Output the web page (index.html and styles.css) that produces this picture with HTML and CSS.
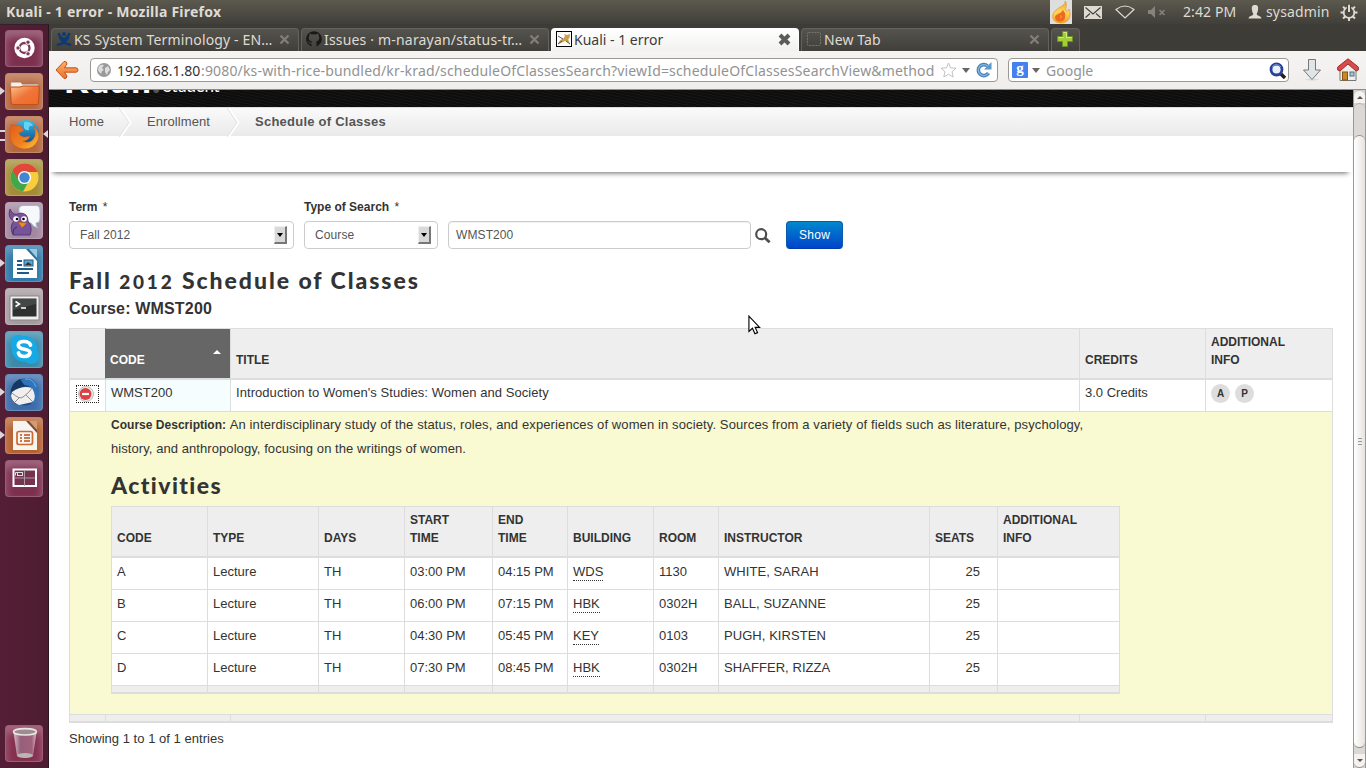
FILE: index.html
```html
<!DOCTYPE html>
<html lang="en">
<head>
<meta charset="utf-8">
<title>Kuali - 1 error</title>
<link rel="stylesheet" href="styles.css">
</head>
<body>
<header class="panel">
  <span class="panel-title">Kuali - 1 error - Mozilla Firefox</span>
  <div class="tray">
    <span class="flame"><svg width="22" height="24" viewBox="0 0 22 24"><defs><linearGradient id="fl" x1="0" y1="0" x2="0" y2="1"><stop offset="0" stop-color="#f3a429"/><stop offset=".5" stop-color="#ffd65c"/><stop offset="1" stop-color="#f2a12a"/></linearGradient></defs><path d="M15 1C16 5 11 6 6 10C0 15 2 23 11 23C19 23 22 16 19 9C18 11 17 12 16 11C15 8 18 4 15 1Z" fill="url(#fl)" stroke="#e3982c" stroke-width=".7"/><path d="M13 10C14 12 16 13 15 17C15 23 6 23 5 18C5 15 8 14 10 13C12 12 12 11 13 10Z" fill="#ee6a1b"/><path d="M10 16c2-1 2 2 0 2" fill="none" stroke="#f9a34c"/></svg></span>
    <svg class="mail" width="18" height="13" viewBox="0 0 18 13"><rect width="18" height="13" fill="#dfdbd2"/><path d="M1.500 1.500L9 8L16.500 1.500M1.500 11.500L6 7.500M16.500 11.500L12 7.500" fill="none" stroke="#45433d" stroke-width="1.200"/></svg>
    <svg class="wifi" width="20" height="14" viewBox="0 0 20 14"><path d="M1 4.500Q10-2.500 19 4.500L10 13Z" fill="none" stroke="#dfdbd2" stroke-width="1.200"/></svg>
    <svg class="mute" width="18" height="12" viewBox="0 0 18 12"><path d="M0 4h3l4-4v12l-4-4H0Z" fill="#85837b"/><path d="M11.500 4l5 5M16.500 4l-5 5" stroke="#85837b" stroke-width="1.500"/></svg>
    <span class="clock">2:42 PM</span>
    <svg class="user" width="14" height="14" viewBox="0 0 14 14"><path d="M7 0C4 0 3.500 2 4 5C4.200 7 5 8 5.300 9C5 11 1 10.500.500 13.500h13C13 10.500 9 11 8.700 9C9 8 9.800 7 10 5C10.500 2 10 0 7 0Z" fill="#dfdbd2"/></svg>
    <span class="username">sysadmin</span>
    <svg class="gear" width="18" height="18" viewBox="0 0 16 16"><circle cx="8" cy="8.500" r="4.800" fill="none" stroke="#dfdbd2" stroke-width="1.500"/><path d="M8 12.500V16M.500 8.500H4M12 8.500H15.500M2.700 3.200L5 5.500M13.300 3.200L11 5.500M2.700 13.800L5 11.500M13.300 13.800L11 11.500" stroke="#dfdbd2" stroke-width="1.800"/><path d="M8 1v8" stroke="#45433d" stroke-width="4"/><path d="M8 1.500v6.500" stroke="#dfdbd2" stroke-width="1.800"/></svg>
  </div>
</header>
<div class="desktop">
  <nav class="launcher">
    <div class="tile t-dash"><svg viewBox="0 0 37 37"><circle cx="18.500" cy="18" r="10.200" fill="#fff"/><circle cx="18.500" cy="18" r="5" fill="none" stroke="#80355a" stroke-width="2.300"/><g fill="#80355a" stroke="#fff" stroke-width="1"><circle cx="12" cy="18" r="2.200"/><circle cx="22" cy="12.200" r="2.200"/><circle cx="22" cy="23.800" r="2.200"/></g></svg></div>
    <div class="tile t-files run"><svg viewBox="0 0 37 37"><defs><linearGradient id="fo" x1="0" y1="0" x2="1" y2="1"><stop offset="0" stop-color="#f9c48a"/><stop offset=".5" stop-color="#f0743a"/><stop offset="1" stop-color="#ee6a24"/></linearGradient></defs><path d="M5 15V9.500h9.500l2 2H32V15Z" fill="#f4f1ec" stroke="#c5b6aa" stroke-width=".7"/><path d="M4.500 15.500Q4 14 6 14H14L17 13H32Q33.500 13 33.300 15L32.500 29Q32.500 31.500 31 31.500H7Q5.200 31.500 5.200 29.500Z" fill="url(#fo)" stroke="#c44d18"/></svg></div>
    <div class="tile t-fox multi current"><svg viewBox="0 0 37 37"><defs><linearGradient id="gl" x1="0" y1="0" x2="0" y2="1"><stop offset="0" stop-color="#35bdea"/><stop offset="1" stop-color="#0b3e87"/></linearGradient><linearGradient id="fx" x1="0" y1="0" x2="1" y2="1"><stop offset="0" stop-color="#e35b1b"/><stop offset=".6" stop-color="#ef8420"/><stop offset="1" stop-color="#fbd13d"/></linearGradient></defs><circle cx="20" cy="17" r="13" fill="url(#gl)"/><path d="M18 6q7-1 9 4q-5-1-4 4q-3 1-5-2Z" fill="#67d2ed"/><path d="M6 8Q7 10 9 9.500Q12 8 15 10Q14 12 18 13.500Q17 16 13 16.500Q13 20 18 21Q21 21 24 20Q22 25 17 25Q25 29 29 20Q30 15 28 10Q35 17 32 24Q28 33 18 33Q7 32 4.500 23Q3 14 6 8Z" fill="url(#fx)" stroke="#cf5519" stroke-width=".5"/></svg></div>
    <div class="tile t-chrome"><svg viewBox="0 0 37 37"><circle cx="18.500" cy="18.500" r="14" fill="#f8cc3c"/><path d="M18.500 18.500L6.400 11.500A14 14 0 0 1 31.500 13H18.500Z" fill="#e14839"/><path d="M18.500 18.500L6.400 11.500A14 14 0 0 0 17 32.400L23 22Z" fill="#42a64c"/><path d="M7 12L12 20L18 13H31Q24 2 13 6Z" fill="#e14839"/><circle cx="18.500" cy="18.500" r="6.600" fill="#fff"/><circle cx="18.500" cy="18.500" r="5.200" fill="#4386d2"/></svg></div>
    <div class="tile t-pidgin"><svg viewBox="0 0 37 37"><path d="M13 6Q14 3.500 17 3.500H31Q34 4 34 8V17Q34 21 30 21Q30 24 32 26Q27 25 25 21H18Q14 20 13 16Z" fill="#f6f8fc" stroke="#a4b6cc"/><path d="M7 33Q3 24 8 19Q1 16 4 7Q7 15 14 11Q22 11 22 19Q27 25 24 33Z" fill="#76539a" stroke="#4a2f68" stroke-width=".8"/><circle cx="10" cy="17" r="2.800" fill="#fff"/><circle cx="18" cy="17" r="2.800" fill="#fff"/><circle cx="11" cy="17" r="1.300"/><circle cx="17.500" cy="17" r="1.300"/><path d="M12 20L21 21L16 26Z" fill="#ef8b28" stroke="#a65012" stroke-width=".6"/><path d="M7 32q0-6 4-7" stroke="#3f2955" fill="none"/></svg></div>
    <div class="tile t-writer run"><svg viewBox="0 0 37 37"><path d="M7 4H22L31 14V33H7Z" fill="#fff"/><path d="M20 4H31V16Z" fill="#2c719d"/><path d="M23 4H31V13Z" fill="#9bc9e2"/><path d="M11 16h5M11 20h5M11 24h16M11 28h12" stroke="#195d88" stroke-width="2"/><rect x="18" y="15" width="9" height="6" fill="#5fa5cc" stroke="#195d88"/><path d="M19 20l3-3 4 3" fill="#333"/></svg></div>
    <div class="tile t-term"><svg viewBox="0 0 37 37"><rect x="4" y="8" width="29" height="24" fill="#eee" stroke="#8d858a"/><rect x="6.500" y="10.500" width="24" height="18" fill="#2c302f"/><path d="M7 11h23v5L7 22Z" fill="#434846"/><path d="M9.500 13.500l4 2.500-4 2.500M15 20h5" fill="none" stroke="#fff" stroke-width="1.500"/></svg></div>
    <div class="tile t-skype"><svg viewBox="0 0 37 37"><g fill="#16a9e3"><circle cx="18.500" cy="18" r="13"/><circle cx="12.500" cy="12" r="8"/><circle cx="25" cy="25" r="8"/></g><path d="M24.500 14Q23 10.500 18 10.500Q12 10.500 12.300 14.300Q12.500 17 18.500 18.200Q24.500 19.500 24 22Q23 25.500 18.500 25.500Q13.500 25.500 12.500 22" fill="none" stroke="#fff" stroke-width="3.700" stroke-linecap="round"/></svg></div>
    <div class="tile t-bird run"><svg viewBox="0 0 37 37"><circle cx="19" cy="18" r="13.500" fill="#1e4e8c"/><path d="M15 6Q27 0 32 12Q36 25 25 31Q32 20 25 13Q20 9 12 12Z" fill="#3174bb"/><path d="M14 5Q8 7 5 15Q3 25 10 30Q7 18 19 12Z" fill="#153967"/><path d="M6 18Q16 11 26 14Q31 22 27 28L13 31Q6 28 5 22Z" fill="#f0efed"/><path d="M6 19Q14 26 17 23Q24 18 26 14M8 29L14 23M27 28L20 21" fill="none" stroke="#8b8d91" stroke-width="1"/><path d="M19 5q8-1 11 8" stroke="#70aade" fill="none"/></svg></div>
    <div class="tile t-impress run"><svg viewBox="0 0 37 37"><path d="M7 4H22L31 14V33H7Z" fill="#f7f5f2"/><path d="M20 4H31V16Z" fill="#814a32"/><path d="M23 4H31V13Z" fill="#d49b79"/><rect x="11" y="14.500" width="15.500" height="13" rx="2" fill="#f7f5f2" stroke="#cf682c" stroke-width="1.700"/><path d="M14 18h2M18 18h6M14 21h2M18 21h6M14 24h2M18 24h6" stroke="#b5521f" stroke-width="1.700"/></svg></div>
    <div class="tile t-work"><svg viewBox="0 0 37 37"><rect x="7.500" y="9.500" width="22.500" height="16.500" fill="#75334f" stroke="#fff" stroke-width="2"/><path d="M18.500 10v16M8 18h21" stroke="#a79aa0"/><rect x="11.500" y="12.500" width="5" height="3" fill="#75334f" stroke="#ddd"/><path d="M9.500 15.500v-3h2" fill="none" stroke="#ddd"/></svg></div>
    <div class="tile t-trash"><svg viewBox="0 0 37 37"><defs><linearGradient id="tr"><stop offset="0" stop-color="#d9bec7"/><stop offset=".3" stop-color="#94607a"/><stop offset=".8" stop-color="#a1627b"/><stop offset="1" stop-color="#d6bbc4"/></linearGradient></defs><path d="M7.500 7L11 31Q19 35 27 31L30.500 7Z" fill="url(#tr)"/><ellipse cx="19" cy="6.800" rx="11.500" ry="3.200" fill="#9f8c91" stroke="#e8e7e5" stroke-width="1.600"/><ellipse cx="19" cy="30.500" rx="8" ry="2.500" fill="#b9b7b3"/></svg></div>
  </nav>
  <main class="browser">
    <div class="tabs">
      <div class="tab"><svg class="fav" width="16" height="16" viewBox="0 0 16 16"><g fill="none" stroke="#0d3a72" stroke-width="2.500"><path d="M2.500 2Q4 7 8 8Q12 7 13.500 2M1 14Q8 13 12.500 6M15 14Q8 13 3.500 6"/></g><circle cx="8" cy="3" r="2" fill="#0d3a72"/></svg><span class="tab-text w1">KS System Terminology - EN…</span><svg class="close" width="11" height="11" viewBox="0 0 11 11"><path d="M1.500 1.500l8 8M9.500 1.500l-8 8"/></svg></div>
      <div class="tab"><svg class="fav" width="16" height="16" viewBox="0 0 16 16"><path d="M8 .2A7.800 7.800 0 0 0 5.500 15.400V12.800Q3 13.200 2.300 11Q1.500 10.200 1.300 10Q2.500 9.700 3.300 11Q4.200 12.200 5.600 11.500Q5.700 10.900 6.100 10.500Q2.700 10 2.700 6.700Q2.700 5.500 3.500 4.600Q3.200 3.500 3.600 2.500Q4.600 2.500 5.800 3.400Q8 2.900 10.200 3.400Q11.400 2.500 12.400 2.500Q12.800 3.500 12.500 4.600Q13.300 5.500 13.300 6.700Q13.200 10 9.900 10.500Q10.500 11 10.500 12.500V15.400A7.800 7.800 0 0 0 8 .2Z" fill="#191919"/></svg><span class="tab-text w2">Issues · m-narayan/status-tr…</span><svg class="close" width="11" height="11" viewBox="0 0 11 11"><path d="M1.500 1.500l8 8M9.500 1.500l-8 8"/></svg></div>
      <div class="tab active"><svg class="fav" width="16" height="16" viewBox="0 0 16 16"><rect x=".5" y=".5" width="15" height="15" fill="#fff" stroke="#000"/><path d="M2 13Q4 8 7 8L9 5L8 3L11 4L14 3L13.500 7Q11 8 14 12L9 10L5 12Z" fill="#c9a04d"/><path d="M2 5l5 3M2 13l4-3M10 10l4 3" stroke="#555" fill="none"/></svg><span class="tab-text w3">Kuali - 1 error</span><svg class="close strong" width="13" height="13" viewBox="0 0 13 13"><path d="M2 2l9 9M11 2l-9 9"/></svg></div>
      <div class="tab"><svg class="fav" width="16" height="16" viewBox="0 0 16 16"><rect x="1.500" y="1.500" width="13" height="13" rx="1" fill="none" stroke="#77756f" stroke-dasharray="2 1"/></svg><span class="tab-text w4">New Tab</span><svg class="close" width="11" height="11" viewBox="0 0 11 11"><path d="M1.500 1.500l8 8M9.500 1.500l-8 8"/></svg></div>
      <div class="tab plus"><svg width="16" height="16" viewBox="0 0 16 16"><path d="M5.500.5h5v5h5v5h-5v5h-5v-5h-5v-5h5Z" fill="#a3cc37" stroke="#6a9422"/><path d="M6.500 1.500h3v5h5M1.500 6.500h5" fill="none" stroke="#d4e98a"/></svg></div>
    </div>
    <div class="toolbar">
      <svg class="back" width="24" height="20" viewBox="0 0 24 20"><defs><linearGradient id="bk" x1="0" y1="0" x2="0" y2="1"><stop offset="0" stop-color="#fbb065"/><stop offset="1" stop-color="#e8702c"/></linearGradient></defs><path d="M1 10L9 1.500Q12 1 12 4L9.500 7.800H21Q23 8 23 10T21 12.200H9.500L12 16Q12 19 9 18.500Z" fill="url(#bk)" stroke="#c6501b"/></svg>
      <div class="field url"><svg class="globe" width="14" height="14" viewBox="0 0 14 14"><circle cx="7" cy="7" r="7" fill="#999"/><path d="M2 3Q5 1 7 2L5 5L7 7L5 8L4 11Q2 9 1 7ZM8 5L11 3L13 7L11 9L10 12L8 9Z" fill="#ddd"/></svg><span class="host">192.168.1.80</span><span class="path">:9080/ks-with-rice-bundled/kr-krad/scheduleOfClassesSearch?viewId=scheduleOfClassesSearchView&amp;method</span><svg class="star" width="17" height="16" viewBox="0 0 17 16"><path d="M8.500 1L10.600 5.800L16 6.200L12 9.700L13.200 15L8.500 12.200L3.800 15L5 9.700L1 6.200L6.400 5.800Z" fill="#fff" stroke="#c2c2c2"/></svg><i class="caret"></i><svg class="reload" width="16" height="16" viewBox="0 0 16 16"><path d="M12.500 11A5.500 5.500 0 1 1 11.500 4" fill="none" stroke="#4684bd" stroke-width="3.600"/><path d="M15.500 0V7.500H8Z" fill="#5c96ca"/><path d="M12.500 11A5.500 5.500 0 1 1 11.500 4" fill="none" stroke="#8db9df" stroke-width="1.200"/></svg></div>
      <div class="field search"><span class="g">g</span><i class="caret"></i><span class="ph">Google</span><svg class="mag" width="17" height="17" viewBox="0 0 17 17"><path d="M11 11l5 5" stroke="#222" stroke-width="3.500"/><circle cx="7.500" cy="7.500" r="5.500" fill="#e8f1fb" stroke="#2c3f94" stroke-width="2.800"/><path d="M3 5Q7 0 12 5" stroke="#7095d3" fill="none"/></svg></div>
      <svg class="down" width="18" height="22" viewBox="0 0 18 22"><ellipse cx="9" cy="20.500" rx="7" ry="1.200" fill="#ddd"/><path d="M5.500.5h7v10.500h5L9 20.500L.5 11h5Z" fill="#dfe4e6" stroke="#75797b"/></svg>
      <svg class="home" width="22" height="24" viewBox="0 0 22 24"><path d="M3 10L11 3L19 10V22.500H3Z" fill="#efeeec" stroke="#777"/><rect x="5.500" y="14" width="5" height="8" fill="#c98a26" stroke="#88550c"/><rect x="13" y="14" width="4" height="4" fill="#acc7d5" stroke="#50727f"/><path d="M.7 12V9L11 .8L21.300 9V12L19 13L11 6L3 13Z" fill="#d64b4b" stroke="#a32a2a"/></svg>
    </div>
    <div class="viewport">
      <div class="page">
        <div class="brand"><span class="kuali">Kuali</span><span class="dot">.</span><span class="student">Student</span></div>
        <div class="crumbs"><span class="c1">Home</span><svg class="chev" width="13" height="29" viewBox="0 0 13 29"><path d="M1.500 0L11.500 14.500L1.500 29" fill="none" stroke="#fff" stroke-width="2"/><path d="M0 0L10 14.500L0 29" fill="none" stroke="#e0e0e0"/></svg><span class="c2">Enrollment</span><svg class="chev" width="13" height="29" viewBox="0 0 13 29"><path d="M1.500 0L11.500 14.500L1.500 29" fill="none" stroke="#fff" stroke-width="2"/><path d="M0 0L10 14.500L0 29" fill="none" stroke="#e0e0e0"/></svg><b class="c3">Schedule of Classes</b></div>
        <div class="spacer"></div>
        <div class="content">
          <div class="form">
            <label class="f-term"><span class="lab">Term <i>*</i></span><span class="box sel">Fall 2012<span class="drop"></span></span></label>
            <label class="f-type"><span class="lab">Type of Search <i>*</i></span><span class="box sel">Course<span class="drop"></span></span></label>
            <span class="box input">WMST200</span>
            <svg class="lookup" width="16" height="16" viewBox="0 0 16 16"><circle cx="6.200" cy="6.200" r="5" fill="none" stroke="#4d4d4d" stroke-width="2.200"/><path d="M9.800 9.800l4.800 4.500" stroke="#4d4d4d" stroke-width="2.800"/></svg>
            <span class="show">Show</span>
          </div>
          <h2 class="title">Fall <span class="osf">2012</span> Schedule of Classes</h2>
          <h3 class="course">Course: WMST200</h3>
          <table class="grid outer">
            <colgroup><col class="o1"><col class="o2"><col class="o3"><col class="o4"><col class="o5"></colgroup>
            <thead><tr><th></th><th class="sorted">CODE<i class="asc"></i></th><th>TITLE</th><th>CREDITS</th><th class="two">ADDITIONAL<br>INFO</th></tr></thead>
            <tbody>
              <tr class="row main"><td class="toggle"><span class="focus"><svg width="16" height="16" viewBox="0 0 16 16"><circle cx="8" cy="8" r="7.500" fill="#eee" stroke="#bbb"/><circle cx="7.500" cy="8" r="6" fill="#dc4146"/><path d="M4 8h7" stroke="#fff" stroke-width="2.200"/></svg></span></td><td class="code">WMST200</td><td class="intro">Introduction to Women's Studies: Women and Society</td><td>3.0 Credits</td><td class="badges"><span>A</span><span>P</span></td></tr>
              <tr class="detail"><td colspan="5">
                <p class="desc"><b>Course Description:</b> <span class="d1">An interdisciplinary study of the status, roles, and experiences of women in society. Sources from a variety of fields such as literature, psychology,</span><br><span class="d2">history, and anthropology, focusing on the writings of women.</span></p>
                <h2 class="title act">Activities</h2>
                <table class="grid inner">
                  <colgroup><col class="i1"><col class="i2"><col class="i3"><col class="i4"><col class="i5"><col class="i6"><col class="i7"><col class="i8"><col class="i9"><col class="i10"></colgroup>
                  <thead><tr><th>CODE</th><th>TYPE</th><th>DAYS</th><th class="two">START<br>TIME</th><th class="two">END<br>TIME</th><th>BUILDING</th><th>ROOM</th><th>INSTRUCTOR</th><th>SEATS</th><th class="two">ADDITIONAL<br>INFO</th></tr></thead>
                  <tbody>
                    <tr class="row"><td>A</td><td>Lecture</td><td>TH</td><td>03:00 PM</td><td>04:15 PM</td><td><u>WDS</u></td><td>1130</td><td class="name">WHITE, SARAH</td><td class="num">25</td><td></td></tr>
                    <tr class="row"><td>B</td><td>Lecture</td><td>TH</td><td>06:00 PM</td><td>07:15 PM</td><td><u>HBK</u></td><td>0302H</td><td class="name">BALL, SUZANNE</td><td class="num">25</td><td></td></tr>
                    <tr class="row"><td>C</td><td>Lecture</td><td>TH</td><td>04:30 PM</td><td>05:45 PM</td><td><u>KEY</u></td><td>0103</td><td class="name">PUGH, KIRSTEN</td><td class="num">25</td><td></td></tr>
                    <tr class="row"><td>D</td><td>Lecture</td><td>TH</td><td>07:30 PM</td><td>08:45 PM</td><td><u>HBK</u></td><td>0302H</td><td class="name">SHAFFER, RIZZA</td><td class="num">25</td><td></td></tr>
                  </tbody>
                  <tfoot><tr><td></td><td></td><td></td><td></td><td></td><td></td><td></td><td></td><td></td><td></td></tr></tfoot>
                </table>
              </td></tr>
            </tbody>
            <tfoot><tr><td></td><td></td><td></td><td></td><td></td></tr></tfoot>
          </table>
          <p class="entries">Showing 1 to 1 of 1 entries</p>
        </div>
      </div>
      <div class="scroll"><div class="sbtn up"></div><div class="trough"></div><div class="thumb"><i></i><i></i><i></i></div><div class="trough low"></div><div class="sbtn dn"></div></div>
    </div>
  </main>
</div>
<svg class="cursor" width="13" height="20" viewBox="0 0 14 21"><path d="M1 1V17.500L4.800 14L7.500 20L10.300 18.700L7.700 13H12.500Z" fill="#fff" stroke="#000" stroke-width="1.200"/></svg>
</body>
</html>
```
FILE: styles.css
```css
* { box-sizing: border-box; }
body { margin: 0; width: 1366px; height: 768px; overflow: hidden; font-family: "Liberation Sans", Arial, sans-serif; font-size: 13px; color: #333; background: #fff; display: flex; flex-direction: column; }
svg { display: block; flex: none; }
i { font-style: normal; }

/* top panel */
.panel { height: 24px; flex: none; background: linear-gradient(#5c594e, #403f3a); display: flex; align-items: center; justify-content: space-between; padding-left: 6px; font-family: "Noto Sans", sans-serif; font-size: 14px; color: #dfdbd2; white-space: nowrap; }
.panel-title { font-weight: 700; font-size: 14px; letter-spacing: .24px; padding-bottom: 2px; }
.tray { display: flex; align-items: center; width: 316px; height: 24px; }
.flame { background: #dedede; width: 22px; height: 24px; }
.mail { margin-left: 12px; }
.wifi { margin-left: 13px; }
.mute { margin-left: 13px; }
.clock { margin-left: 17px; width: 65px; letter-spacing: .1px; padding-bottom: 2px; }
.username { margin-left: 4px; width: 74px; letter-spacing: .15px; padding-bottom: 2px; }

.desktop { flex: 1; display: flex; min-height: 0; }

/* launcher */
.launcher { width: 49px; background: linear-gradient(90deg, #541f36, #4e1c31); border-right: 1px solid #2c1420; border-top: 1px solid #33202a; padding: 5px 0 6px 5px; display: flex; flex-direction: column; gap: 6px; }
.tile { width: 38px; height: 37px; flex: none; border-radius: 4px; border: 1px solid rgba(255,255,255,.22); box-shadow: inset 0 6px 8px rgba(255,255,255,.28); position: relative; }
.tile svg { width: 37px; height: 37px; margin: -1px 0 0 -.5px; }
.t-dash, .t-work { background: #7d2f50; }
.t-files, .t-fox { background: #b5683f; }
.t-chrome { background: #a38c37; }
.t-pidgin { background: #a287a0; }
.t-writer { background: #2d79a8; }
.t-term { background: #a59a9f; }
.t-skype { background: #3b89a9; }
.t-bird { background: #3d6da9; }
.t-impress { background: #b5602f; }
.t-trash { background: #85304f; margin-top: auto; }
.run::before { content: ""; position: absolute; left: -6px; top: 13px; border: 4px solid transparent; border-left: 5px solid #ddd5d8; border-right: 0; }
.multi::before { content: ""; position: absolute; left: -6px; top: 13px; width: 5px; height: 7px; border-top: 2px solid #ddd5d8; border-bottom: 2px solid #ddd5d8; }
.current::after { content: ""; position: absolute; right: -6px; top: 13px; border: 4px solid transparent; border-right: 5px solid #ddd5d8; border-left: 0; }

/* browser chrome */
.browser { flex: 1; display: flex; flex-direction: column; min-width: 0; font-family: "Noto Sans", sans-serif; }
.tabs { height: 27px; flex: none; background: #3d3c37; display: flex; align-items: flex-end; gap: 2px; padding-left: 2px; }
.tab { width: 248px; height: 23px; border: 1px solid #64625c; border-bottom: 0; border-radius: 4px 4px 0 0; background: linear-gradient(#55534d, #413f3b); color: #dfdbd2; font-size: 14px; display: flex; align-items: center; padding: 0 8px 2px 4px; white-space: nowrap; }
.fav { margin-right: 2px; }
.tab .close { margin-left: auto; }
.close path { stroke: #807e77; stroke-width: 2.300; fill: none; }
.close.strong path { stroke: #5c5c5a; stroke-width: 4; }
.w1 { letter-spacing: .14px; }
.w2 { letter-spacing: .18px; }
.w4 { letter-spacing: .1px; }
.tab.active { background: linear-gradient(#fff, #f2f1f0); border-color: #fff; color: #3c3c3c; padding-right: 7px; }
.tab.plus { width: 29px; padding: 0 0 2px 5px; }
.toolbar { height: 39px; flex: none; background: linear-gradient(#f5f4f3, #efeeec); border-bottom: 1px solid #8b8f82; display: flex; align-items: center; }
.back { margin-left: 6px; }
.field { height: 24px; border: 1px solid #9b9994; border-radius: 4px; background: #fff; display: flex; align-items: center; white-space: nowrap; font-size: 14px; color: #929292; }
.url { width: 908px; margin-left: 11px; padding-left: 6px; }
.globe { margin-right: 6px; }
.host { color: #333; width: 84px; }
.path { width: 734px; letter-spacing: .165px; }
.star { margin-left: 5px; }
.caret { border: 4px solid transparent; border-top: 5px solid #666; border-bottom: 0; margin: 0 6px 0 5px; }
.search { width: 281px; margin-left: 10px; padding-left: 3px; }
.g { width: 16px; height: 16px; background: #4380f0; color: #fff; font: bold 15px/13px "Liberation Serif", serif; text-align: center; border-radius: 1px; }
.search .caret { margin-left: 4px; }
.search .mag { margin-left: auto; margin-right: 2px; }
.down { margin-left: 14px; }
.home { margin-left: 16px; }

/* page */
.viewport { flex: 1; display: flex; min-height: 0; font-family: "Liberation Sans", Arial, sans-serif; }
.page { width: 1304px; overflow: hidden; background: #fff; }
.brand { height: 17px; background: repeating-linear-gradient(12deg, #0e0e0e 0 2px, #151515 2px 3px); overflow: hidden; display: flex; align-items: flex-end; padding-left: 15px; color: #fff; font-family: Lato, sans-serif; }
.kuali { font-weight: 900; font-size: 35px; line-height: 20px; height: 38px; width: 88px; letter-spacing: 2px; }
.dot { font-weight: 900; font-size: 35px; line-height: 20px; height: 38px; width: 9px; color: #555; }
.student { font-size: 17px; line-height: 20px; height: 31px; margin-left: 2px; letter-spacing: -.3px; }
.crumbs { height: 29px; background: linear-gradient(#fafafa, #eaeaea); border-top: 1px solid #ddd; display: flex; align-items: center; color: #555; font-size: 13px; padding-left: 20px; }
.crumbs span, .crumbs b { padding-bottom: 1px; }
.c1 { width: 50px; letter-spacing: .08px; }
.c2 { width: 80px; margin-left: 15px; letter-spacing: .08px; }
.c3 { margin-left: 15px; letter-spacing: .24px; }
.spacer { height: 36px; background: #fff; box-shadow: 0 5px 5px -4px rgba(0,0,0,.6); margin: 0 1px 0 0; }
.content { padding: 28px 20px 0; }
.form { display: flex; align-items: flex-end; height: 49px; }
.lab { display: block; font-weight: 700; font-size: 12px; line-height: 14px; margin-bottom: 7px; }
.lab i { font-weight: 400; margin-left: 2px; }
.box { border: 1px solid #ccc; border-radius: 4px; height: 28px; display: flex; align-items: center; font-size: 12px; color: #555; background: #fff; box-shadow: inset 0 1px 1px rgba(0,0,0,.06); letter-spacing: .1px; }
.sel { padding: 0 6px 0 10px; justify-content: space-between; box-shadow: none; }
.f-term { width: 225px; }
.f-type { width: 134px; margin-left: 10px; }
.input { width: 303px; margin-left: 10px; padding-left: 7px; }
.drop { width: 13px; height: 18px; background: #d9d9d9; border: 1px solid #f0f0f0; border-right: 2px solid #777; border-bottom: 2px solid #777; display: flex; align-items: center; justify-content: center; }
.drop::after { content: ""; border: 3px solid transparent; border-top: 4px solid #000; border-bottom: 0; }
.lookup { margin: 0 0 5px 4px; }
.show { width: 57px; height: 28px; margin-left: 15px; border-radius: 4px; background: linear-gradient(#0088cc, #0044cc); border: 1px solid #0a5cab; border-bottom-color: #003cab; color: #fff; font-size: 12px; line-height: 26px; text-align: center; letter-spacing: .3px; }
.title { margin: 17px 0 0; font: 900 23px/28px Lato, sans-serif; letter-spacing: 1.95px; }
.osf { font-size: 19px; letter-spacing: 2.8px; }
.course { margin: 3px 0 10px; font-size: 16px; line-height: 19px; height: 19px; letter-spacing: .17px; }
.grid { table-layout: fixed; border-collapse: separate; border-spacing: 0; border-right: 1px solid #ddd; border-bottom: 1px solid #ddd; }
.grid th, .grid td { border-left: 1px solid #ddd; border-top: 1px solid #ddd; padding: 0 0 0 5px; text-align: left; }
.grid th { background: #eee; height: 51px; border-bottom: 1px solid #ddd; vertical-align: bottom; font-size: 12px; line-height: 18px; padding-bottom: 9px; white-space: nowrap; }
.row td { height: 32px; background: #fff; vertical-align: top; padding-top: 6px; line-height: 16px; }
.row.main td { padding-top: 5px; }
.grid > tfoot td { height: 8px; background: #eee; border-bottom: 1px solid #ddd; }
.outer { width: 1264px; }
.inner { width: 1009px; }
.o1 { width: 36px; } .o2 { width: 125px; } .o3 { width: 849px; } .o4 { width: 126px; } .o5 { width: 127px; }
.i1 { width: 96px; } .i2 { width: 111px; } .i3 { width: 86px; } .i4 { width: 88px; } .i5 { width: 75px; } .i6 { width: 86px; } .i7 { width: 65px; } .i8 { width: 211px; } .i9 { width: 68px; } .i10 { width: 122px; }
.grid th.sorted { background: #666; color: #fff; border-left-color: #666; position: relative; padding-left: 4px; }
.asc { position: absolute; right: 9px; top: 21px; border: 4px solid transparent; border-bottom: 4px solid #fff; border-top: 0; }
.row td.code { background: #f5fdff; }
.intro, .name { letter-spacing: .06px; }
.grid .row td.toggle { padding: 5px 0 0 6px; }
.focus { width: 23px; height: 18px; border: 1px dotted #222; display: block; }
.focus svg { margin-left: 1px; }
.grid .row td.badges { padding-top: 4px; }
.badges span { display: inline-block; width: 19px; height: 19px; border-radius: 50%; background: #ddd; font-weight: 700; font-size: 10px; line-height: 20px; text-align: center; margin-right: 5px; }
.detail > td { background: #f9f9d2; height: 303px; vertical-align: top; }
.grid .detail > td { padding-left: 41px; }
.desc { margin: 1px 0 0; line-height: 24px; white-space: nowrap; }
.desc b { font-size: 12px; letter-spacing: .02px; }
.d1 { letter-spacing: .115px; }
.d2 { letter-spacing: .07px; }
.act { margin: 10px 0 7px; letter-spacing: 1.4px; }
.row td.num { padding-right: 17px; text-align: right; }
u { text-decoration: none; border-bottom: 1px dotted #333; padding-bottom: 1px; }
.entries { margin: 8px 0 0; line-height: 16px; letter-spacing: .03px; }

/* scrollbar */
.scroll { width: 13px; display: flex; flex-direction: column; background: #d8d5d2; border-left: 1px solid #999; border-right: 1px solid #999; }
.sbtn { height: 13px; background: #f4f3f1; border-radius: 6px 6px 0 0; border-top: 1px solid #bbb; display: flex; align-items: center; justify-content: center; }
.sbtn.dn { border-radius: 0 0 6px 6px; border: 0; border-bottom: 1px solid #999; height: 14px; }
.up::after { content: ""; border: 3px solid transparent; border-bottom: 3px solid #555; border-top: 0; }
.dn::after { content: ""; border: 3px solid transparent; border-top: 3px solid #555; border-bottom: 0; }
.trough { height: 32px; background: #dbd8d6; border-radius: 6px 6px 0 0; border-top: 1px solid #b5b2af; }
.trough.low { height: 6px; border: 0; border-radius: 0 0 6px 6px; }
.thumb { flex: 1; border-radius: 6px; background: linear-gradient(90deg, #fff, #e6e4e1); border-top: 1px solid #8f8d8a; border-bottom: 1px solid #8f8d8a; display: flex; flex-direction: column; gap: 2px; align-items: center; justify-content: center; }
.thumb i { width: 4px; height: 1px; background: #999; }

.cursor { position: absolute; left: 748px; top: 315px; }
```
